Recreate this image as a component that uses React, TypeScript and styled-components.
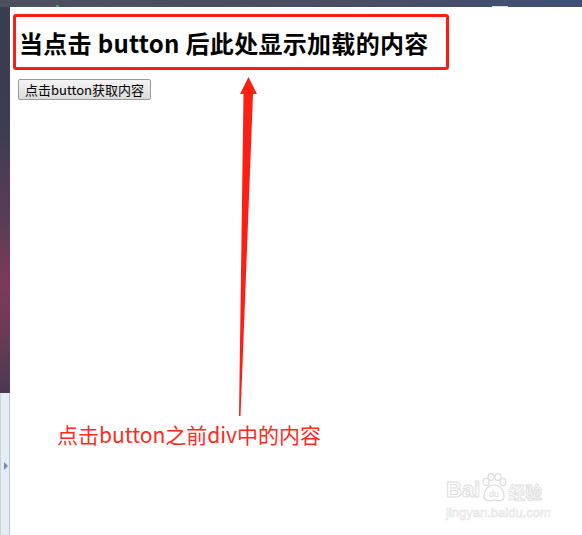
import React from 'react';
import styled, { createGlobalStyle } from 'styled-components';

const GlobalStyle = createGlobalStyle`
  html, body {
    margin: 0;
    padding: 0;
    background: #ffffff;
  }
  body {
    font-family: "Noto Sans CJK SC", "Noto Sans", sans-serif;
  }
`;

const App: React.FC = () => {
  return (
    <Page>
      <GlobalStyle />
      <TopBar>
        <GreenDot />
        <TabMark />
      </TopBar>
      <Body>
        <Sidebar>
          <SidebarTop />
          <SidebarBottom>
            <Toggle />
          </SidebarBottom>
        </Sidebar>
        <Main>
          <Heading>当点击 button 后此处显示加载的内容</Heading>
          <ButtonRow>
            <LoadButton>点击button获取内容</LoadButton>
          </ButtonRow>
          <Note>点击button之前div中的内容</Note>
        </Main>
      </Body>

      {/* annotation arrow drawn over the page */}
      <Arrow width="582" height="535" viewBox="0 0 582 535">
        <polygon
          points="239,416 243.5,94 240,94 248.5,77 257,94 253,94 240.5,416"
          fill="#ff1e14"
        />
      </Arrow>

      <Watermark>
        <MarkRow>
          <MarkBig>Bai</MarkBig>
          <Paw>
            <svg width="28" height="30" viewBox="0 0 28 30">
              <g fill="none" stroke="#dcdcdc" strokeWidth="1.2">
                <ellipse cx="6" cy="9" rx="3" ry="3.6" />
                <ellipse cx="11" cy="4" rx="3" ry="3.4" />
                <ellipse cx="18" cy="4" rx="3" ry="3.4" />
                <ellipse cx="23" cy="9" rx="3" ry="3.6" />
                <path d="M4 24 C4 16 9 12 14 12 C19 12 24 16 24 24 C24 28 18 28 14 27 C10 28 4 28 4 24 Z" />
              </g>
              <text x="14" y="24" textAnchor="middle" fontSize="9" fill="#dcdcdc" fontFamily="Liberation Sans, sans-serif">du</text>
            </svg>
          </Paw>
          <MarkCjk>经验</MarkCjk>
        </MarkRow>
        <MarkUrl>jingyan.baidu.com</MarkUrl>
      </Watermark>
    </Page>
  );
};

export default App;

const Page = styled.div`
  position: relative;
  width: 582px;
  height: 535px;
  overflow: hidden;
  display: flex;
  flex-direction: column;
  background: #ffffff;
`;

const TopBar = styled.div`
  position: relative;
  height: 7px;
  flex-shrink: 0;
  background: linear-gradient(90deg, #4c4f5e 0%, #4b4e60 60%, #3f4f78 100%);
`;

const GreenDot = styled.div`
  position: absolute;
  left: 56px;
  bottom: 0;
  width: 3px;
  height: 2px;
  background: #2fae5a;
`;

const TabMark = styled.div`
  position: absolute;
  left: 492px;
  bottom: 0;
  width: 16px;
  height: 1px;
  background: #d8dbe4;
`;

const Body = styled.div`
  flex: 1;
  display: flex;
`;

const Sidebar = styled.div`
  width: 10px;
  flex-shrink: 0;
  display: flex;
  flex-direction: column;
`;

const SidebarTop = styled.div`
  height: 386px;
  background: linear-gradient(
    180deg,
    #393d50 0%,
    #3b3d52 30%,
    #5a3c56 55%,
    #7c3a5a 72%,
    #6a3a56 86%,
    #4a3a50 100%
  );
`;

const SidebarBottom = styled.div`
  flex: 1;
  display: flex;
  align-items: center;
  background: #e6ecf2;
  border-left: 1px solid #c8d4e0;
  border-right: 1px solid #b8c8d6;
  box-sizing: border-box;
  padding-top: 4px;
`;

const Toggle = styled.div`
  margin-left: 3px;
  width: 0;
  height: 0;
  border-top: 4px solid transparent;
  border-bottom: 4px solid transparent;
  border-left: 4px solid #6b8db0;
`;

const Main = styled.div`
  flex: 1;
  display: flex;
  flex-direction: column;
  align-items: flex-start;
  padding: 7px 0 0 3px;
`;

const Heading = styled.h1`
  margin: 0;
  box-sizing: border-box;
  width: 436px;
  height: 56px;
  padding: 0 0 0 3px;
  border: 3px solid #ff1a12;
  border-radius: 3px;
  display: flex;
  align-items: center;
  font-family: "Noto Sans CJK SC", sans-serif;
  font-size: 24px;
  font-weight: 700;
  color: #000000;
  letter-spacing: 0.3px;
  white-space: nowrap;
`;

const ButtonRow = styled.div`
  display: flex;
  margin: 9px 0 0 5px;
`;

const LoadButton = styled.button`
  box-sizing: border-box;
  width: 133px;
  height: 21px;
  padding: 0;
  border: 1px solid #9a9a9a;
  border-radius: 2px;
  background: linear-gradient(180deg, #f4f4f4 0%, #e8e8e8 50%, #dcdcdc 100%);
  font-family: "Noto Sans CJK SC", sans-serif;
  font-size: 13px;
  line-height: 19px;
  color: #000000;
`;

const Note = styled.div`
  margin: 322px 0 0 44px;
  font-family: "Noto Sans CJK SC", sans-serif;
  font-size: 21px;
  line-height: 25px;
  color: #ff2a1c;
  white-space: nowrap;
`;

const Arrow = styled.svg`
  position: absolute;
  left: 0;
  top: 0;
  pointer-events: none;
`;

const Watermark = styled.div`
  position: absolute;
  left: 446px;
  top: 473px;
  display: flex;
  flex-direction: column;
  color: transparent;
`;

const MarkRow = styled.div`
  display: flex;
  align-items: flex-end;
`;

const MarkBig = styled.span`
  font-family: "Liberation Sans", sans-serif;
  font-size: 22px;
  line-height: 22px;
  font-weight: 700;
  -webkit-text-stroke: 1px #dedede;
  color: transparent;
`;

const Paw = styled.span`
  display: flex;
  margin: 0 0 -2px 0;
`;

const MarkCjk = styled.span`
  font-family: "Noto Sans CJK SC", sans-serif;
  font-size: 17px;
  line-height: 19px;
  font-weight: 700;
  -webkit-text-stroke: 0.8px #dedede;
  color: transparent;
`;

const MarkUrl = styled.span`
  margin-top: 6px;
  font-family: "Liberation Sans", sans-serif;
  font-size: 13px;
  line-height: 12px;
  -webkit-text-stroke: 0.6px #e2e2e2;
  color: transparent;
`;
